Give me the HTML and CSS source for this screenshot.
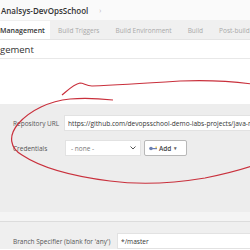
FILE: index.html
```html
<!DOCTYPE html>
<html lang="en">

<head>
  <meta charset="UTF-8">
  <meta name="viewport" content="width=device-width, initial-scale=1.0">
  <title>Analsys-DevOpsSchool Config</title>
  <link rel="stylesheet" href="styles.css">
</head>

<body>
  <div class="crumbs">
    <span class="crumb">Analsys-DevOpsSchool</span>
    <span class="crumb-sep">›</span>
  </div>

  <nav class="tabs">
    <span class="tab is-active">Management</span>
    <span class="tab">Build Triggers</span>
    <span class="tab">Build Environment</span>
    <span class="tab">Build</span>
    <span class="tab">Post-build</span>
  </nav>

  <h2 class="section-title">gement</h2>

  <div class="blank"></div>

  <section class="scm">
    <div class="row">
      <label class="row-label">Repository URL</label>
      <input class="field" type="text" readonly
        value="https://github.com/devopsschool-demo-labs-projects/java-maven-app.git">
    </div>
    <div class="row">
      <label class="row-label">Credentials</label>
      <div class="select">
        <span>- none -</span>
        <svg class="chevron" width="6" height="4" viewBox="0 0 6 4">
          <path d="M0.5 0.5 L3 3 L5.5 0.5" fill="none" stroke="#555" stroke-width="1" />
        </svg>
      </div>
      <button class="add-btn" type="button">
        <svg width="9" height="5" viewBox="0 0 9 5">
          <circle cx="2" cy="2.5" r="1.8" fill="#6a7fb0" />
          <rect x="3" y="2" width="5" height="1.2" fill="#6a7fb0" />
          <rect x="6.5" y="0.5" width="1.3" height="1.6" fill="#e0c040" />
        </svg>
        <span>Add</span>
        <span class="caret">▾</span>
      </button>
    </div>
  </section>

  <div class="band"></div>

  <section class="branches">
    <div class="row">
      <label class="row-label">Branch Specifier (blank for 'any')</label>
      <input class="field" type="text" readonly value="*/master">
    </div>
    <div class="next-row"></div>
  </section>

  <!-- red hand drawn marker around the repo settings -->
  <svg class="marker" width="250" height="250" viewBox="0 0 250 250">
    <path d="M62 95 C68 90 74 84 80 83 C84 83 86 86 92 86 C120 85 150 83 180 81 C205 80 230 81 252 84"
      fill="none" stroke="#c9303c" stroke-width="1.2" />
    <path d="M113 100 C95 98 80 98 70 99 C50 101 30 110 18 124 C8 136 10 148 22 155 C40 167 70 176 110 181 C140 185 175 183 205 178 C225 174 240 170 252 166"
      fill="none" stroke="#c9303c" stroke-width="1.2" />
  </svg>
</body>

</html>
```

FILE: styles.css
```css
html {
  box-sizing: border-box;
  font-family: "Open Sans", "Noto Sans", sans-serif;
  font-size: 7px;
}

*,
*:before,
*:after {
  box-sizing: inherit;
}

body {
  margin: 0;
  width: 250px;
  height: 250px;
  overflow: hidden;
  background-color: #fff;
  color: #333;
  position: relative;
}

/* breadcrumb bar */
.crumbs {
  height: 21px;
  display: flex;
  align-items: center;
  gap: 11px;
  padding-left: 1px;
  background-color: #fafafa;
  border-bottom: 1px solid #f0f0f0;
}

.crumb {
  font-size: 8px;
  font-weight: 600;
  color: #333;
}

.crumb-sep {
  font-size: 7px;
  color: #bbb;
}

/* config tabs */
.tabs {
  height: 19px;
  display: flex;
  align-items: stretch;
  background-color: #f0f0f0;
  border-bottom: 1px solid #e4e4e4;
  white-space: nowrap;
}

.tab {
  display: flex;
  align-items: center;
  padding: 0 8px;
  font-size: 6.5px;
  color: #a8a8a8;
}

.tab.is-active {
  padding-left: 0;
  width: 50px;
  background-color: #fff;
  color: #333;
  font-weight: 600;
  font-size: 7px;
}

.section-title {
  margin: 0;
  height: 19px;
  display: flex;
  align-items: center;
  font-size: 9.5px;
  font-weight: 400;
  color: #333;
  border-bottom: 1px solid #e8e8e8;
}

.blank {
  height: 45px;
}

/* scm block */
.scm {
  height: 108px;
  background-color: #ededed;
  padding-top: 11px;
  display: flex;
  flex-direction: column;
  gap: 9px;
}

.row {
  display: flex;
  align-items: center;
  padding-left: 13px;
  white-space: nowrap;
}

.row-label {
  flex: 0 0 51px;
  overflow: visible;
  font-size: 6.5px;
  color: #555;
}

.field {
  flex: 1 1 0;
  min-width: 0;
  margin-right: -12px;
  height: 16px;
  padding: 0 3px;
  border: 1px solid #e2e2e2;
  background-color: #fff;
  font-family: inherit;
  font-size: 6.6px;
  color: #333;
  outline: none;
}

.select {
  flex: 0 0 76px;
  margin-left: 1px;
  height: 16px;
  display: flex;
  align-items: center;
  justify-content: space-between;
  padding: 0 4px 0 5px;
  background-color: #fff;
  border: 1px solid #e2e2e2;
  font-size: 6.5px;
  color: #777;
}

.add-btn {
  flex: 0 0 43px;
  margin-left: 3px;
  height: 16px;
  display: flex;
  align-items: center;
  gap: 1px;
  padding: 0 4px;
  background-color: #fff;
  border: 1px solid #b8b8b8;
  border-radius: 2px;
  font-family: inherit;
  font-size: 6.5px;
  font-weight: 600;
  color: #444;
}

.caret {
  margin-left: 2px;
  font-size: 5px;
  color: #666;
}

.band {
  height: 10px;
  background-color: #f4f4f4;
  border-bottom: 1px solid #dcdcdc;
}

.branches {
  height: 27px;
  background-color: #efefef;
  padding-top: 11px;
}

.branches .row-label {
  flex-basis: 104px;
}

.next-row {
  width: 30px;
  height: 2px;
  background-color: #fff;
}

/* annotation drawn over the page */
.marker {
  position: absolute;
  left: 0;
  top: 0;
  pointer-events: none;
}
```
